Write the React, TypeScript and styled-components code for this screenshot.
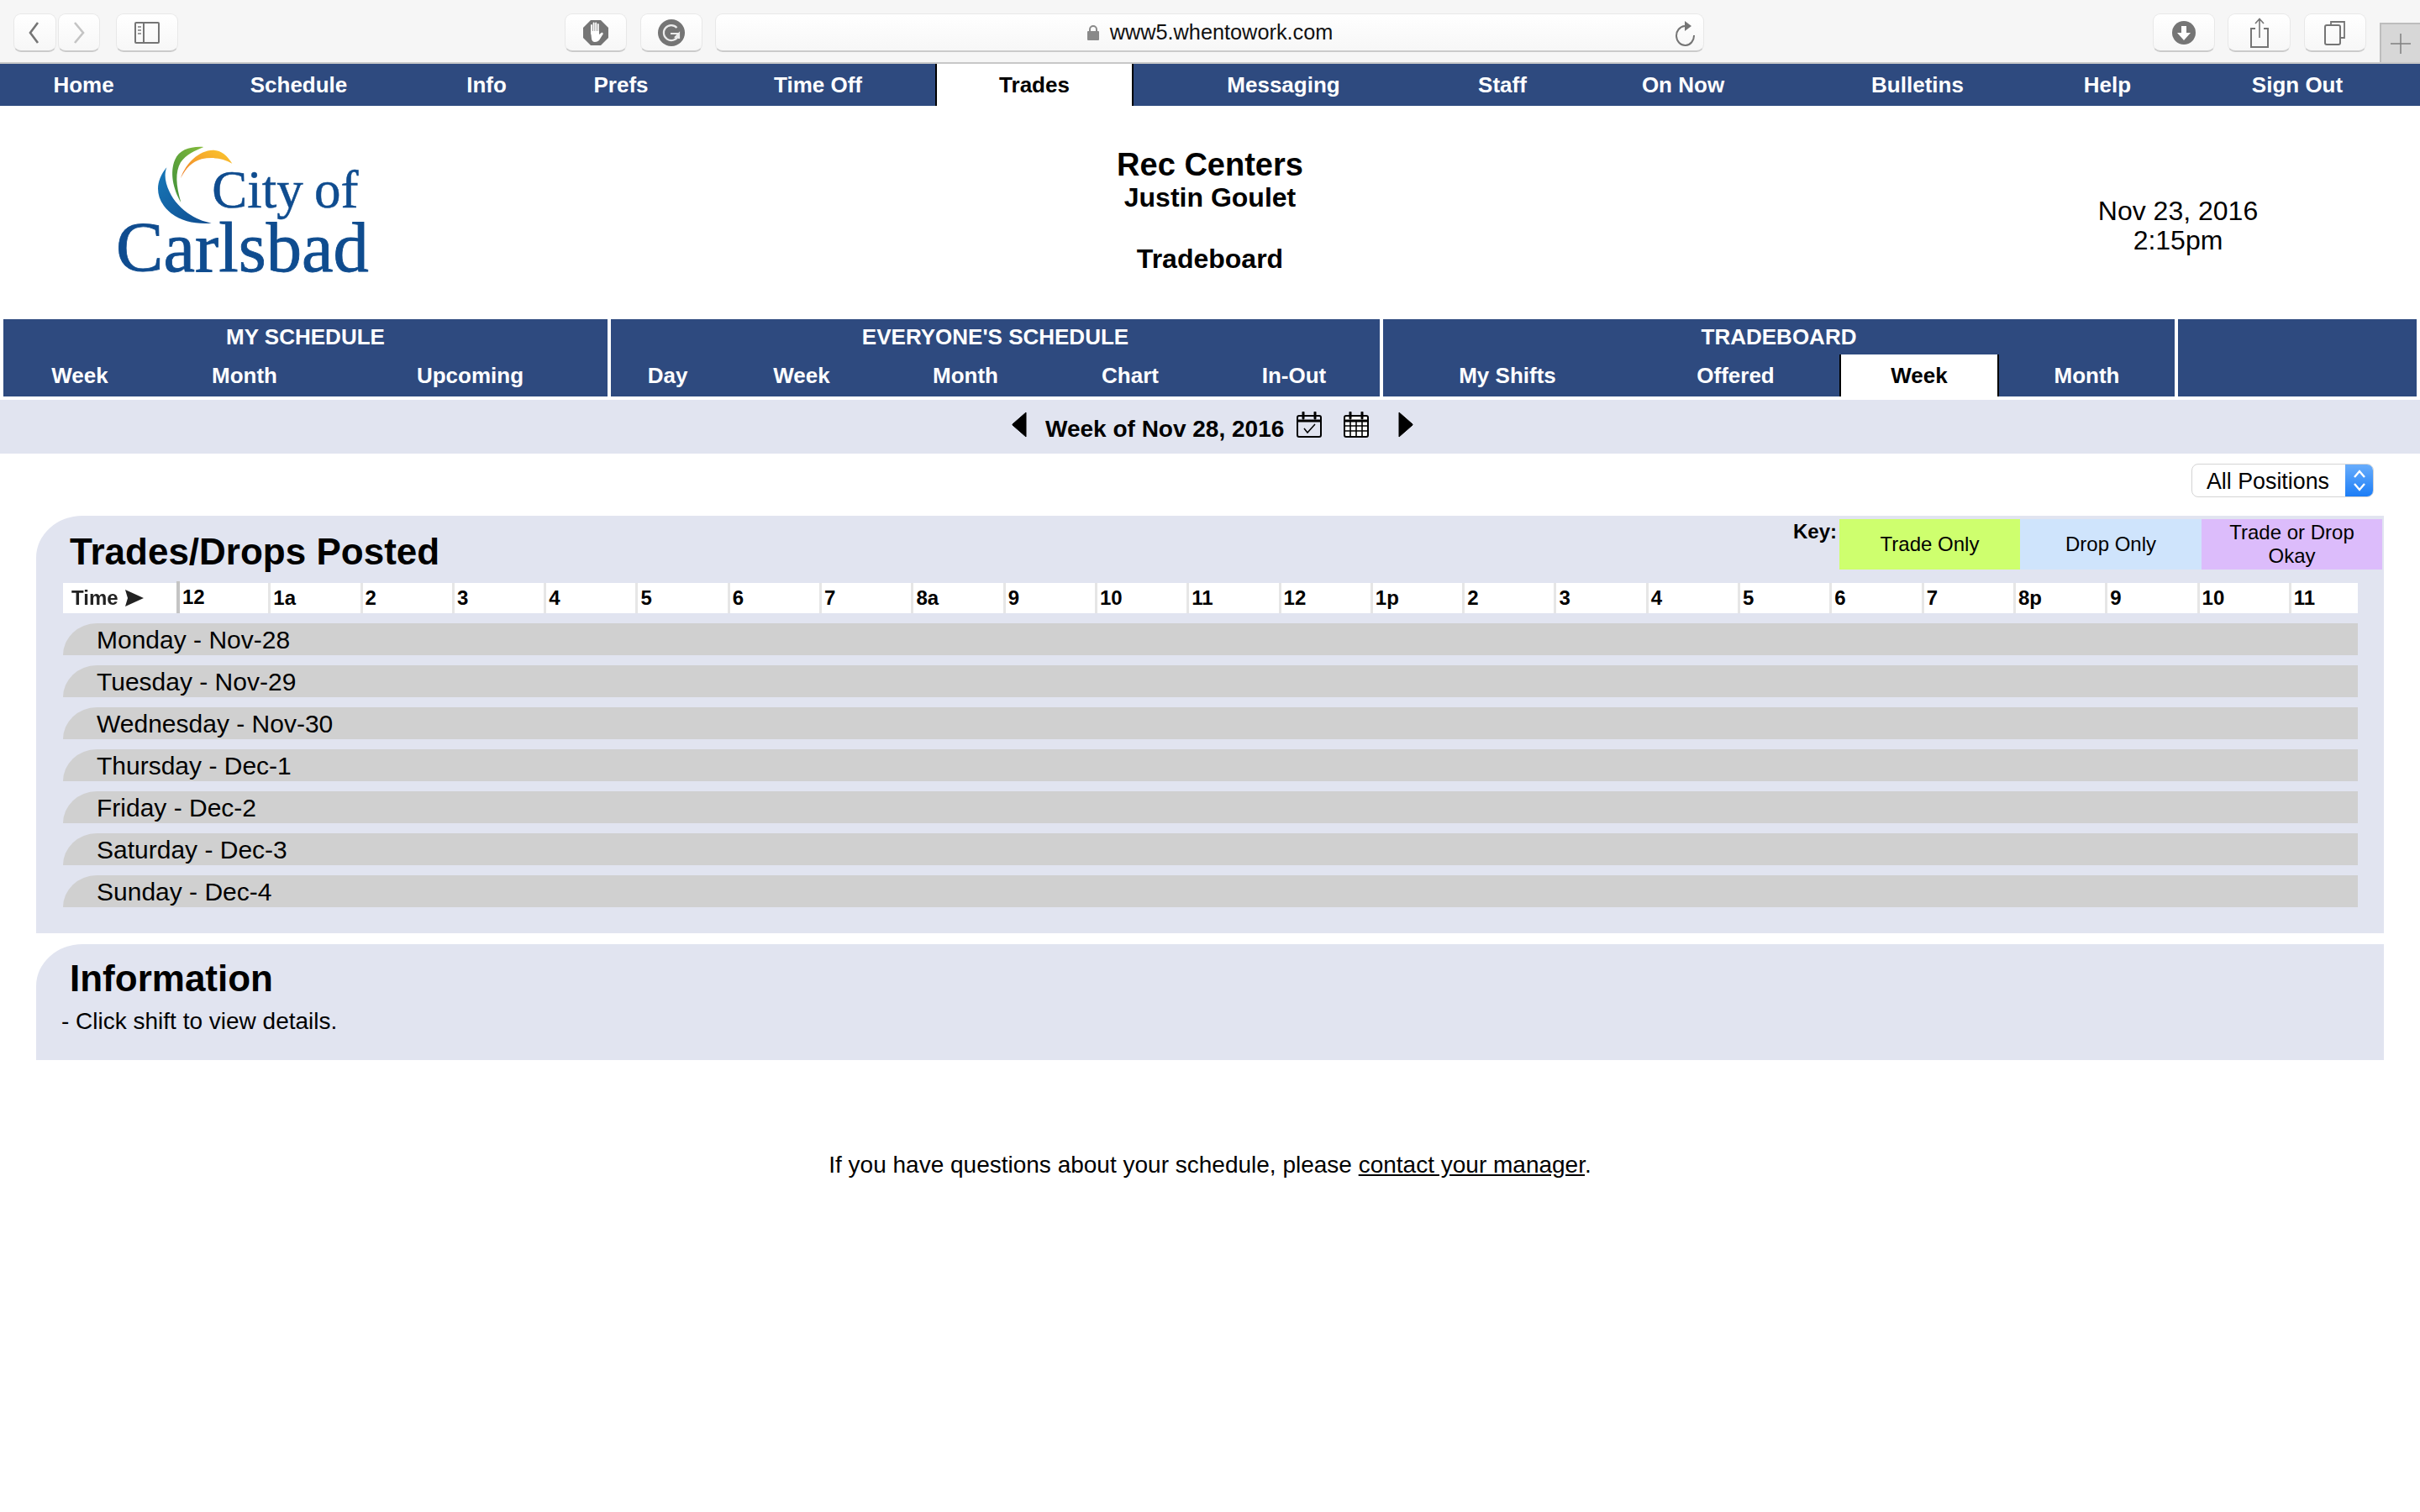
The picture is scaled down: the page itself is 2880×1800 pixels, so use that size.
import React from 'react'
import styled, { createGlobalStyle } from 'styled-components'

const NAVY = '#2e4a7f'
const LAVENDER = '#e1e4f0'
const GLYPH = '#757575'

const GlobalStyle = createGlobalStyle`
  html, body {
    margin: 0;
    padding: 0;
    background: #fff;
    color: #000;
    font-family: "Liberation Sans", Arial, sans-serif;
  }
`

const Page = styled.div`
  width: 2880px;
  height: 1800px;
  overflow: hidden;
  background: #fff;
`

/* browser chrome */
const Toolbar = styled.div`
  height: 74px;
  box-sizing: border-box;
  display: flex;
  align-items: flex-start;
  padding: 16px 0 0 16px;
  background: #f6f6f6;
`

const ToolButton = styled.div<{ $w: number; $ml?: number }>`
  width: ${(p) => p.$w}px;
  height: 46px;
  margin-left: ${(p) => p.$ml ?? 0}px;
  flex: none;
  box-sizing: border-box;
  display: flex;
  align-items: center;
  justify-content: center;
  background: linear-gradient(#ffffff, #f7f7f7);
  border: 1px solid #e8e8e8;
  border-bottom: 2px solid #cbcbcb;
  border-radius: 9px;
`

const UrlBar = styled(ToolButton)`
  position: relative;
  gap: 12px;
  font-size: 25.3px;
  color: #111;
`

const ReloadSlot = styled.span`
  position: absolute;
  right: 8px;
  top: 6px;
  display: flex;
`

const NewTab = styled.div`
  width: 48px;
  height: 47px;
  margin: 11px 0 0 16px;
  flex: none;
  box-sizing: border-box;
  display: flex;
  align-items: center;
  justify-content: center;
  background: #d7d7d7;
  border-left: 2px solid #bdbdbd;
  border-top: 2px solid #bdbdbd;
`

const ChromeRule = styled.div`
  height: 2px;
  background: #c8c8c8;
`

/* main nav */
const MainNav = styled.nav`
  height: 50px;
  display: flex;
  background: ${NAVY};
`

const NavCell = styled.a<{ $w: number; $active?: boolean }>`
  width: ${(p) => p.$w}px;
  flex: none;
  box-sizing: border-box;
  padding-left: ${(p) => (p.$active ? 0 : 2)}px;
  text-align: center;
  font-size: 26px;
  font-weight: bold;
  line-height: 50px;
  color: ${(p) => (p.$active ? '#000' : '#fff')};
  background: ${(p) => (p.$active ? '#fff' : 'transparent')};
  border-left: ${(p) => (p.$active ? '2px solid #000' : 'none')};
  border-right: ${(p) => (p.$active ? '2px solid #000' : 'none')};
`

/* org header */
const Masthead = styled.header`
  height: 254px;
  display: grid;
  grid-template-columns: 576px 1fr 576px;
`

const LogoCell = styled.div`
  padding: 4px 0 0 80px;
`

const TitleCell = styled.div`
  padding-top: 50px;
  text-align: center;
  font-weight: bold;
`

const OrgName = styled.div`
  font-size: 38px;
  line-height: 41px;
`

const Person = styled.div`
  font-size: 32px;
  line-height: 36px;
`

const PageName = styled.div`
  margin-top: 37px;
  font-size: 32px;
  line-height: 36px;
`

const DateCell = styled.div`
  padding-top: 108px;
  text-align: center;
  font-size: 32px;
  line-height: 35px;
`

/* schedule sub nav */
const SubNav = styled.div`
  height: 92px;
  display: flex;
  gap: 4px;
  padding: 0 4px;
`

const SubGroup = styled.div<{ $w: number }>`
  width: ${(p) => p.$w}px;
  flex: none;
  background: ${NAVY};
  color: #fff;
  font-size: 26px;
  font-weight: bold;
  text-align: center;
`

const SubTitle = styled.div`
  height: 42px;
  line-height: 42px;
`

const SubItems = styled.div`
  height: 50px;
  display: flex;
`

const SubItem = styled.a<{ $w: number; $active?: boolean }>`
  width: ${(p) => p.$w}px;
  flex: none;
  box-sizing: border-box;
  line-height: 50px;
  color: ${(p) => (p.$active ? '#000' : '#fff')};
  background: ${(p) => (p.$active ? '#fff' : 'transparent')};
  border-left: ${(p) => (p.$active ? '2px solid #000' : 'none')};
  border-right: ${(p) => (p.$active ? '2px solid #000' : 'none')};
`

const WeekBar = styled.div`
  height: 64px;
  margin-top: 4px;
  padding-left: 1204px;
  display: flex;
  align-items: flex-start;
  background: ${LAVENDER};
`

const WeekLabel = styled.span`
  margin: 19px 0 0 22px;
  width: 300px;
  font-size: 28px;
  font-weight: bold;
  line-height: 32px;
  white-space: nowrap;
`

const WeekIcon = styled.svg<{ $ml: number }>`
  margin: 14px 0 0 ${(p) => p.$ml}px;
  flex: none;
  display: block;
`

const FilterRow = styled.div`
  display: flex;
  justify-content: flex-end;
  padding: 12px 55px 22px 0;
`

const PositionSelect = styled.div`
  width: 217px;
  height: 40px;
  box-sizing: border-box;
  display: flex;
  align-items: center;
  justify-content: space-between;
  padding: 2px 0 0 17px;
  background: #fff;
  border: 1px solid #d4d4d4;
  border-radius: 8px;
  font-size: 26.8px;
  overflow: hidden;
`

const SelectStepper = styled.span`
  width: 33px;
  height: 40px;
  margin-top: -2px;
  display: flex;
  align-items: center;
  justify-content: center;
  background: linear-gradient(#6aaefc, #1a7cf6);
`

/* panels */
const Panel = styled.section`
  margin: 0 43px;
  box-sizing: border-box;
  background: ${LAVENDER};
  border-top-left-radius: 55px 50px;
`

const TradesPanel = styled(Panel)`
  padding: 4px 2px 31px 0;
`

const PanelHead = styled.div`
  height: 60px;
  display: flex;
  justify-content: space-between;
  padding-left: 40px;
  margin-bottom: 16px;
`

const PanelTitle = styled.h2`
  margin: 14px 0 0;
  font-size: 44px;
  line-height: 50px;
  font-weight: bold;
`

const KeyWrap = styled.div`
  display: flex;
`

const KeyLabel = styled.span`
  margin-right: 3px;
  font-size: 24px;
  font-weight: bold;
  line-height: 30px;
`

const KeySwatch = styled.div<{ $bg: string; $w: number }>`
  width: ${(p) => p.$w}px;
  display: flex;
  align-items: center;
  justify-content: center;
  text-align: center;
  padding: 0 24px;
  box-sizing: border-box;
  font-size: 24px;
  line-height: 28px;
  background: ${(p) => p.$bg};
`

const Hours = styled.div`
  height: 36px;
  margin: 0 29px 12px 32px;
  display: grid;
  grid-template-columns: 135px repeat(23, 109.3px) 1fr;
  background: #fff;
  font-size: 24px;
  font-weight: bold;
  line-height: 36px;
`

const TimeLabel = styled.div`
  padding-left: 10px;
  display: flex;
  align-items: center;
  gap: 7px;
  color: #222;
  filter: blur(0.5px);
`

const Hour = styled.div<{ $first?: boolean }>`
  padding-left: 3px;
  border-left: ${(p) => (p.$first ? '4px solid #c4c4c4' : '3px solid #e6e6e6')};
  margin-top: ${(p) => (p.$first ? '-2px' : '0')};
  line-height: ${(p) => (p.$first ? '38px' : '36px')};
`

const DayRow = styled.div`
  height: 38px;
  margin: 0 29px 12px 32px;
  padding-left: 40px;
  background: #d0d0d0;
  border-top-left-radius: 40px 38px;
  font-size: 30px;
  line-height: 39px;
  &:last-child {
    margin-bottom: 0;
  }
`

const InfoPanel = styled(Panel)`
  height: 138px;
  margin-top: 13px;
  padding: 16px 0 0 30px;
`

const InfoTitle = styled(PanelTitle)`
  margin: 0 0 10px 10px;
`

const InfoText = styled.div`
  font-size: 28px;
  line-height: 32px;
`

const Footer = styled.div`
  margin-top: 109px;
  text-align: center;
  font-size: 28px;
  line-height: 32px;
`

const ManagerLink = styled.a`
  color: #000;
  text-decoration: underline;
`

const topNav = [
  { label: 'Home', w: 197 },
  { label: 'Schedule', w: 315 },
  { label: 'Info', w: 132 },
  { label: 'Prefs', w: 188 },
  { label: 'Time Off', w: 281 },
  { label: 'Trades', w: 236, active: true },
  { label: 'Messaging', w: 355 },
  { label: 'Staff', w: 166 },
  { label: 'On Now', w: 264 },
  { label: 'Bulletins', w: 294 },
  { label: 'Help', w: 158 },
  { label: 'Sign Out', w: 294 },
]

const subGroups = [
  {
    title: 'MY SCHEDULE',
    w: 719,
    items: [
      { label: 'Week', w: 182 },
      { label: 'Month', w: 210 },
      { label: 'Upcoming', w: 327 },
    ],
  },
  {
    title: "EVERYONE'S SCHEDULE",
    w: 915,
    items: [
      { label: 'Day', w: 135 },
      { label: 'Week', w: 184 },
      { label: 'Month', w: 206 },
      { label: 'Chart', w: 186 },
      { label: 'In-Out', w: 204 },
    ],
  },
  {
    title: 'TRADEBOARD',
    w: 942,
    items: [
      { label: 'My Shifts', w: 296 },
      { label: 'Offered', w: 247 },
      { label: 'Week', w: 190, active: true },
      { label: 'Month', w: 209 },
    ],
  },
  { title: '', w: 284, items: [] },
]

const hours = ['12', '1a', '2', '3', '4', '5', '6', '7', '8a', '9', '10', '11', '12', '1p', '2', '3', '4', '5', '6', '7', '8p', '9', '10', '11']

const days = ['Monday - Nov-28', 'Tuesday - Nov-29', 'Wednesday - Nov-30', 'Thursday - Dec-1', 'Friday - Dec-2', 'Saturday - Dec-3', 'Sunday - Dec-4']

const Chevron = ({ left, color }: { left?: boolean; color: string }) => (
  <svg width="18" height="26" viewBox="0 0 18 26">
    <path d={left ? 'M12 1 L3 13 L12 25' : 'M4 1 L14 13 L4 25'} fill="none" stroke={color} strokeWidth="2.6" />
  </svg>
)

const SidebarGlyph = () => (
  <svg width="30" height="26" viewBox="0 0 30 26">
    <rect x="1" y="1" width="28" height="24" rx="1" fill="none" stroke={GLYPH} strokeWidth="2" />
    <path d="M11 1 V25" stroke={GLYPH} strokeWidth="2" />
    <path d="M4 6 H8 M4 10 H8 M4 14 H8" stroke={GLYPH} strokeWidth="2" opacity=".7" />
  </svg>
)

const BlockerGlyph = () => (
  <svg width="30" height="30" viewBox="0 0 30 30">
    <path d="M9 0 H21 L30 9 V21 L21 30 H9 L0 21 V9 Z" fill={GLYPH} />
    <path d="M10 6 V16 M12.6 3.5 V15 M15.2 3.5 V15 M17.8 5 V16" stroke="#fff" strokeWidth="1.9" strokeLinecap="round" />
    <path d="M9 13 H19 V17 L22.5 14.5 L24 16 L19 24 Q17 26 14 26 Q10.5 26 10 22 Z" fill="#fff" />
  </svg>
)

const GrammarGlyph = () => (
  <svg width="32" height="32" viewBox="0 0 32 32">
    <circle cx="16" cy="16" r="16" fill={GLYPH} />
    <path d="M22.5 10 A9 9 0 1 0 24 20" fill="none" stroke="#ececec" strokeWidth="2.2" />
    <path d="M15 17 H25 M20 22 L25 17 V23" fill="none" stroke="#ececec" strokeWidth="2.2" />
  </svg>
)

const LockGlyph = () => (
  <svg width="16" height="20" viewBox="0 0 16 20">
    <path d="M4 9 V6 A4 4 0 0 1 12 6 V9" fill="none" stroke="#8a8a8a" strokeWidth="2" />
    <rect x="1" y="8" width="14" height="11" rx="1" fill="#8a8a8a" />
  </svg>
)

const ReloadGlyph = () => (
  <svg width="26" height="32" viewBox="0 0 26 32">
    <path d="M12 8 A10.5 11.5 0 1 0 23 19" fill="none" stroke={GLYPH} strokeWidth="2" />
    <path d="M12 2 L20 8 L12 14 Z" fill={GLYPH} />
  </svg>
)

const DownloadGlyph = () => (
  <svg width="28" height="28" viewBox="0 0 28 28">
    <circle cx="14" cy="14" r="14" fill={GLYPH} />
    <path d="M11 6 H17 V14 H22 L14 23 L6 14 H11 Z" fill="#fff" />
  </svg>
)

const ShareGlyph = () => (
  <svg width="24" height="36" viewBox="0 0 24 36">
    <path d="M7 13 H2 V35 H22 V13 H17" fill="none" stroke={GLYPH} strokeWidth="2" />
    <path d="M12 2 V24 M7 7 L12 1.5 L17 7" fill="none" stroke={GLYPH} strokeWidth="1.6" />
  </svg>
)

const TabsGlyph = () => (
  <svg width="26" height="30" viewBox="0 0 26 30">
    <path d="M8 5 V2 H24 V21 H20" fill="none" stroke={GLYPH} strokeWidth="1.8" />
    <rect x="1" y="6" width="18" height="23" rx="2" fill="none" stroke={GLYPH} strokeWidth="2" />
  </svg>
)

const PlusGlyph = () => (
  <svg width="24" height="24" viewBox="0 0 24 24">
    <path d="M12 0 V24 M0 12 H24" stroke="#808080" strokeWidth="1.5" />
  </svg>
)

const Logo = () => (
  <svg width="420" height="240" viewBox="0 0 1260 720">
    <defs>
      <linearGradient id="arcBlue" x1="0" y1="0" x2="1" y2="1">
        <stop offset="0" stopColor="#1878b8" />
        <stop offset="1" stopColor="#0f4c8f" />
      </linearGradient>
      <linearGradient id="arcGreen" x1="1" y1="0" x2="0" y2="1">
        <stop offset="0" stopColor="#86bc3c" />
        <stop offset="1" stopColor="#3f8f3a" />
      </linearGradient>
      <linearGradient id="arcOrange" x1="0" y1="1" x2="1" y2="0">
        <stop offset="0" stopColor="#ee7f2b" />
        <stop offset="1" stopColor="#fbc92e" />
      </linearGradient>
    </defs>
    <path d="M355 208 C320 250 312 300 345 345 C385 398 450 412 515 407 C450 395 390 350 365 295 C350 262 345 235 355 208 Z" fill="url(#arcBlue)" />
    <path d="M487 135 C440 132 400 145 385 180 C365 225 378 285 406 333 C388 270 385 225 405 190 C425 160 455 150 487 135 Z" fill="url(#arcGreen)" />
    <path d="M405 246 C425 190 470 148 520 146 C550 146 570 165 589 194 C555 175 520 170 480 178 C445 188 425 210 405 246 Z" fill="url(#arcOrange)" />
    <text x="517" y="352" fontFamily="Liberation Serif, serif" fontSize="189" wordSpacing="-8" fill="#0f4c8f" stroke="#0f4c8f" strokeWidth="1.5">City of</text>
    <text x="174" y="580" fontFamily="Liberation Serif, serif" fontSize="254" fill="#0f4c8f" stroke="#0f4c8f" strokeWidth="2.5">Carlsbad</text>
  </svg>
)

const App = () => {
  return (
    <Page>
      <GlobalStyle />
      <Toolbar>
        <ToolButton $w={51}><Chevron left color={GLYPH} /></ToolButton>
        <ToolButton $w={50} $ml={2}><Chevron color="#c4c4c4" /></ToolButton>
        <ToolButton $w={74} $ml={19}><SidebarGlyph /></ToolButton>
        <ToolButton $w={74} $ml={460}><BlockerGlyph /></ToolButton>
        <ToolButton $w={74} $ml={16}><GrammarGlyph /></ToolButton>
        <UrlBar $w={1177} $ml={15}>
          <LockGlyph />
          <span>www5.whentowork.com</span>
          <ReloadSlot><ReloadGlyph /></ReloadSlot>
        </UrlBar>
        <ToolButton $w={74} $ml={534}><DownloadGlyph /></ToolButton>
        <ToolButton $w={75} $ml={15}><ShareGlyph /></ToolButton>
        <ToolButton $w={74} $ml={16}><TabsGlyph /></ToolButton>
        <NewTab><PlusGlyph /></NewTab>
      </Toolbar>
      <ChromeRule />

      <MainNav>
        {topNav.map((item) => (
          <NavCell key={item.label} $w={item.w} $active={item.active}>{item.label}</NavCell>
        ))}
      </MainNav>

      <Masthead>
        <LogoCell><Logo /></LogoCell>
        <TitleCell>
          <OrgName>Rec Centers</OrgName>
          <Person>Justin Goulet</Person>
          <PageName>Tradeboard</PageName>
        </TitleCell>
        <DateCell>
          <div>Nov 23, 2016</div>
          <div>2:15pm</div>
        </DateCell>
      </Masthead>

      <SubNav>
        {subGroups.map((group, i) => (
          <SubGroup key={i} $w={group.w}>
            <SubTitle>{group.title}</SubTitle>
            <SubItems>
              {group.items.map((item) => (
                <SubItem key={item.label} $w={item.w} $active={'active' in item && item.active}>{item.label}</SubItem>
              ))}
            </SubItems>
          </SubGroup>
        ))}
      </SubNav>

      <WeekBar>
        <WeekIcon $ml={0} width="18" height="31" viewBox="0 0 18 31">
          <path d="M17 1 V30 L1 16 V15 Z" fill="#000" stroke="#000" strokeLinejoin="round" />
        </WeekIcon>
        <WeekLabel>Week of Nov 28, 2016</WeekLabel>
        <WeekIcon $ml={-1} width="30" height="31" viewBox="0 0 30 31">
          <rect x="1" y="5" width="28" height="25" rx="2" fill="none" stroke="#000" strokeWidth="2" />
          <path d="M1 11 H29" stroke="#000" strokeWidth="3" />
          <path d="M8 1 V8 M22 1 V8" stroke="#000" strokeWidth="3" strokeLinecap="round" />
          <path d="M9 20 L13 25 L22 15" fill="none" stroke="#000" strokeWidth="1.5" />
        </WeekIcon>
        <WeekIcon $ml={26} width="30" height="31" viewBox="0 0 30 31">
          <rect x="1" y="5" width="28" height="25" rx="2" fill="#fff" stroke="#000" strokeWidth="2" />
          <path d="M1 11 H29" stroke="#000" strokeWidth="3" />
          <path d="M8 1 V8 M22 1 V8" stroke="#000" strokeWidth="3" strokeLinecap="round" />
          <path d="M1 17 H29 M1 23 H29 M8 11 V30 M15 11 V30 M22 11 V30" stroke="#000" strokeWidth="1.6" />
        </WeekIcon>
        <WeekIcon $ml={35} width="18" height="31" viewBox="0 0 18 31">
          <path d="M1 1 V30 L17 16 V15 Z" fill="#000" stroke="#000" strokeLinejoin="round" />
        </WeekIcon>
      </WeekBar>

      <FilterRow>
        <PositionSelect>
          All Positions
          <SelectStepper>
            <svg width="16" height="28" viewBox="0 0 16 28">
              <path d="M2 10 L8 3 L14 10 M2 18 L8 25 L14 18" fill="none" stroke="#fff" strokeWidth="2.4" />
            </svg>
          </SelectStepper>
        </PositionSelect>
      </FilterRow>

      <TradesPanel>
        <PanelHead>
          <PanelTitle>Trades/Drops Posted</PanelTitle>
          <KeyWrap>
            <KeyLabel>Key:</KeyLabel>
            <KeySwatch $bg="#ceff6e" $w={215}>Trade Only</KeySwatch>
            <KeySwatch $bg="#cfe4fc" $w={216}>Drop Only</KeySwatch>
            <KeySwatch $bg="#dcbcfb" $w={215}>Trade or Drop Okay</KeySwatch>
          </KeyWrap>
        </PanelHead>
        <Hours>
          <TimeLabel>
            Time
            <svg width="24" height="22" viewBox="0 0 24 22">
              <path d="M1 1 L23 11 L1 21 L4 11 Z" fill="#222" />
            </svg>
          </TimeLabel>
          {hours.map((h, i) => (
            <Hour key={i} $first={i === 0}>{h}</Hour>
          ))}
        </Hours>
        {days.map((d) => (
          <DayRow key={d}>{d}</DayRow>
        ))}
      </TradesPanel>

      <InfoPanel>
        <InfoTitle>Information</InfoTitle>
        <InfoText>- Click shift to view details.</InfoText>
      </InfoPanel>

      <Footer>
        If you have questions about your schedule, please <ManagerLink>contact your manager</ManagerLink>.
      </Footer>
    </Page>
  )
}

export default App
